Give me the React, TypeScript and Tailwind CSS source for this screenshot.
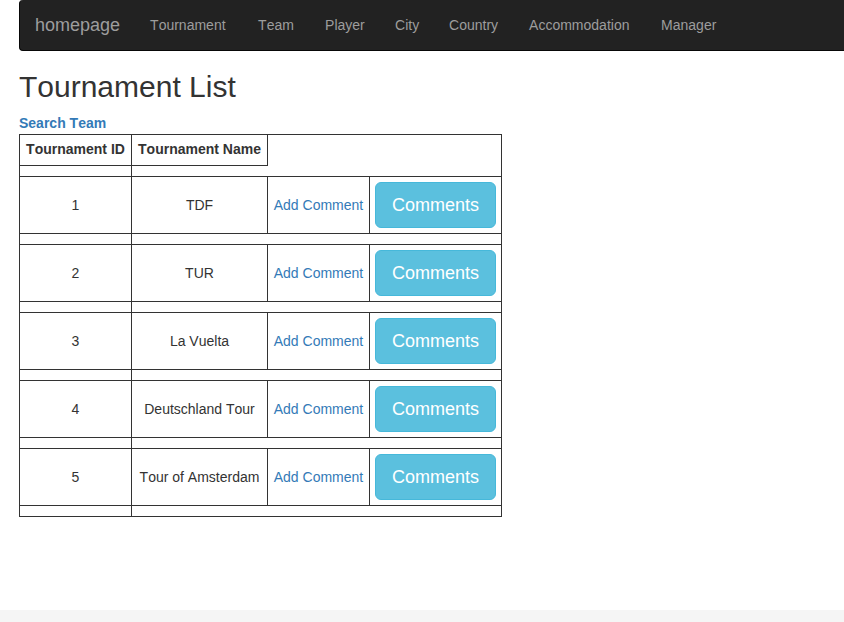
import { Fragment } from "react";

const navItems = ["Tournament", "Team", "Player", "City", "Country", "Accommodation", "Manager"];

const tournaments = [
  { id: 1, name: "TDF" },
  { id: 2, name: "TUR" },
  { id: 3, name: "La Vuelta" },
  { id: 4, name: "Deutschland Tour" },
  { id: 5, name: "Tour of Amsterdam" },
];

function Navbar() {
  return (
    <nav className="flex h-[51px] items-center rounded-l border-b border-l border-[#080808] bg-[#222222] pl-[15px] text-[#9d9d9d]">
      <a href="#home" className="mr-[30px] text-lg leading-5">
        homepage
      </a>
      <ul className="grid grid-cols-[108px_67px_70px_54px_80px_132px_auto]">
        {navItems.map((item) => (
          <li key={item}>
            <a href={`#${item.toLowerCase()}`}>{item}</a>
          </li>
        ))}
      </ul>
    </nav>
  );
}

function SpacerRow() {
  return (
    <tr className="h-[11px]">
      <td className="border border-[#333333]" />
    </tr>
  );
}

function TournamentTable() {
  return (
    <table className="w-[483px] table-fixed border-collapse border border-[#333333] text-center">
      <colgroup>
        <col className="w-[112px]" />
        <col className="w-[136px]" />
        <col className="w-[102px]" />
        <col className="w-[132px]" />
      </colgroup>
      <thead>
        <tr className="h-[31px]">
          <th className="border border-[#333333] pb-0.5 whitespace-nowrap">Tournament ID</th>
          <th className="border border-[#333333] pb-0.5 whitespace-nowrap">Tournament Name</th>
        </tr>
      </thead>
      <tbody>
        <SpacerRow />
        {tournaments.map(({ id, name }) => (
          <Fragment key={id}>
            <tr className="h-[57px]">
              <td className="border border-[#333333]">{id}</td>
              <td className="border border-[#333333] whitespace-nowrap">{name}</td>
              <td className="border border-[#333333] whitespace-nowrap">
                <a href={`#add-comment-${id}`} className="text-[#337ab7]">
                  Add Comment
                </a>
              </td>
              <td className="border border-[#333333] px-[5px]">
                <button
                  type="button"
                  className="block h-[46px] w-full rounded-md border border-[#46b8da] bg-[#5bc0de] text-lg text-white"
                >
                  Comments
                </button>
              </td>
            </tr>
            <SpacerRow />
          </Fragment>
        ))}
      </tbody>
    </table>
  );
}

export default function App() {
  return (
    <div className="flex min-h-screen flex-col bg-white font-['Liberation_Sans',Arial,sans-serif] text-sm text-[#333333] [font-kerning:none]">
      <div className="pl-[19px]">
        <Navbar />
        <main className="pt-5 pb-[93px]">
          <h1 className="mb-[10px] text-3xl leading-8">Tournament List</h1>
          <a href="#search-team" className="mb-px block w-fit font-bold text-[#337ab7]">
            Search Team
          </a>
          <TournamentTable />
        </main>
      </div>
      <footer className="min-h-3 flex-1 bg-[#f5f5f5]" />
    </div>
  );
}
